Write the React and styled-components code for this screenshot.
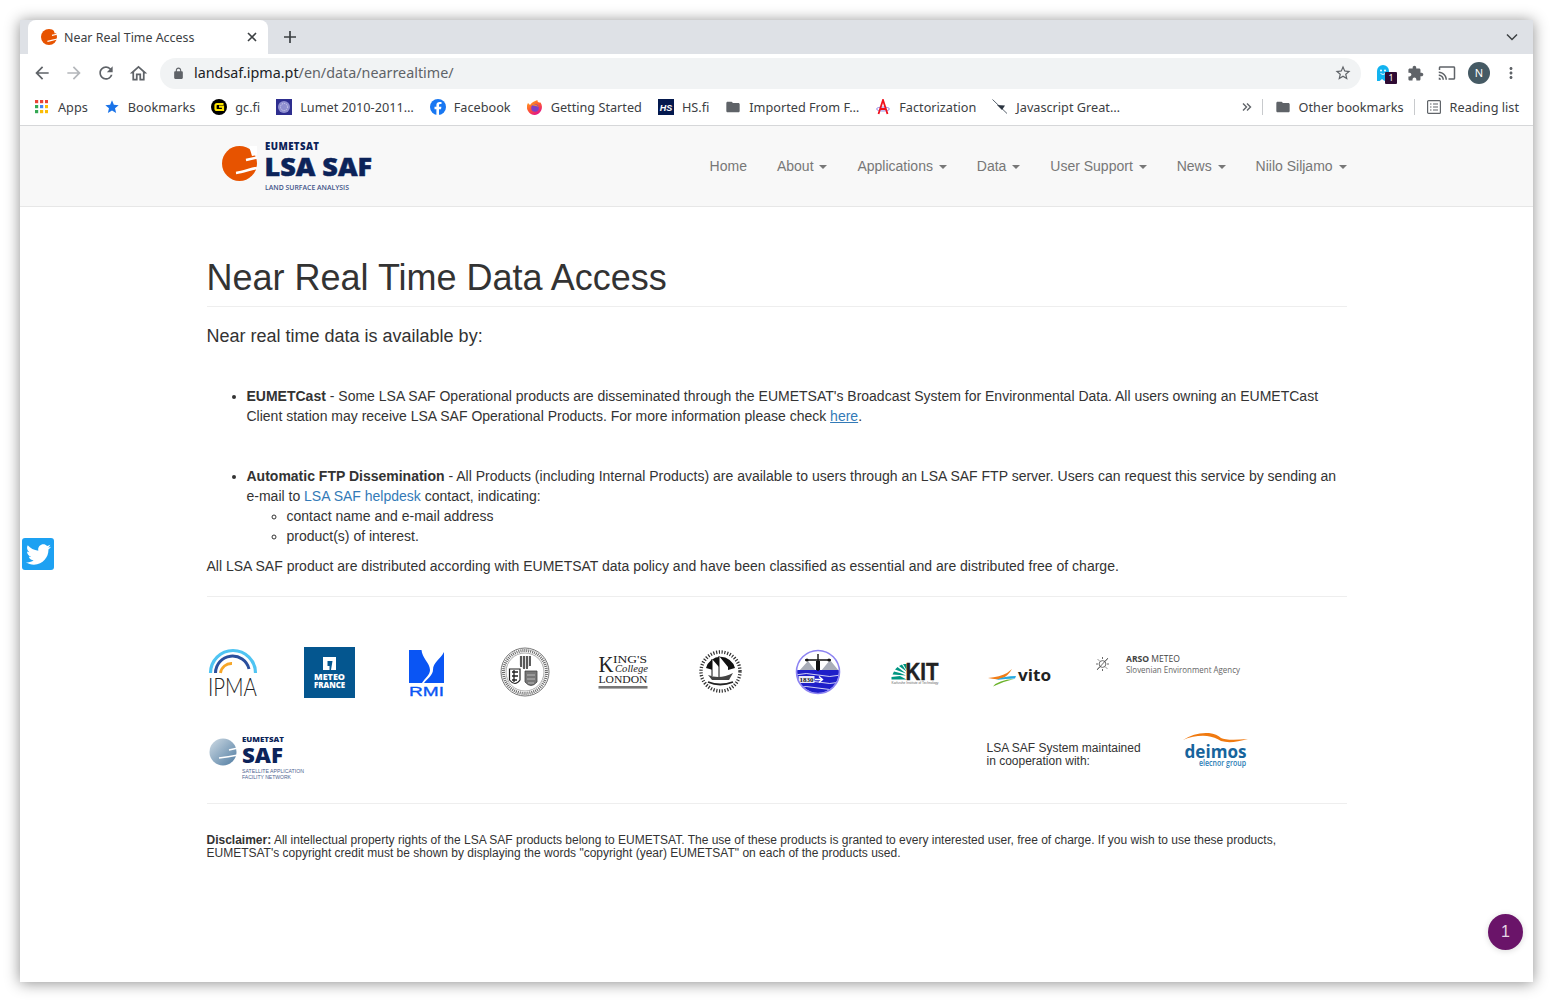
import React from 'react';
import styled, { createGlobalStyle } from 'styled-components';
import { FaTwitter } from 'react-icons/fa';

const Global = createGlobalStyle`
  html, body { margin: 0; padding: 0; background: #fff; }
  body { font-family: "Liberation Sans", Arial, sans-serif; overflow: hidden; }
  * { box-sizing: border-box; }
`;

const Page = styled.div`
  width: 1553px;
  height: 1002px;
  padding: 20px;
  background: #fff;
`;

const Window = styled.div`
  position: relative;
  display: flex;
  flex-direction: column;
  width: 1513px;
  height: 962px;
  background: #fff;
  box-shadow: 0 1px 14px rgba(0, 0, 0, 0.45);
  overflow: hidden;
`;

/* browser chrome */
const TabStrip = styled.div`
  display: flex;
  align-items: flex-end;
  height: 34px;
  padding: 0 6px 0 8px;
  background: #dee1e6;
  flex-shrink: 0;
`;

const Tab = styled.div`
  display: flex;
  align-items: center;
  width: 240px;
  height: 34px;
  padding: 0 11px 0 13px;
  background: #fff;
  border-radius: 8px 8px 0 0;
`;

const TabTitle = styled.span`
  flex: 1;
  margin-left: 7px;
  font: 12.4px "Noto Sans", sans-serif;
  color: #3c4043;
`;

const NewTab = styled.button`
  display: flex;
  align-items: center;
  justify-content: center;
  width: 28px;
  height: 28px;
  margin: 0 0 3px 8px;
  padding: 0;
  border: 0;
  background: none;
  color: #3c4043;
`;

const TabChevron = styled.div`
  display: flex;
  margin: 0 9px 13px auto;
  color: #3c4043;
`;

const Toolbar = styled.div`
  display: flex;
  align-items: center;
  height: 38px;
  padding: 0 6px;
  flex-shrink: 0;
`;

const ToolBtn = styled.div`
  position: relative;
  display: flex;
  align-items: center;
  justify-content: center;
  width: 32px;
  height: 32px;
  color: ${p => p.$off ? '#b4b7bb' : '#5f6368'};
`;

const Omnibox = styled.div`
  display: flex;
  align-items: center;
  flex: 1;
  height: 31px;
  margin: 0 6px;
  padding: 0 9px 0 12px;
  background: #f1f3f4;
  border-radius: 16px;
  color: #5f6368;
`;

const Url = styled.div`
  flex: 1;
  margin-left: 9px;
  margin-top: -1px;
  font: 14.33px "Noto Sans", sans-serif;
  color: #5f6368;
  b { font-weight: 400; color: #202124; }
`;

const ExtBadge = styled.span`
  position: absolute;
  left: 18px;
  top: 15px;
  width: 12px;
  height: 12px;
  background: #2f0b33;
  border-radius: 1px;
  color: #fff;
  font: 9px/12px "Noto Sans", sans-serif;
  text-align: center;
`;

const Avatar = styled.div`
  width: 22px;
  height: 22px;
  border-radius: 50%;
  background: #455a64;
  color: #fff;
  font: 11px/22px "Noto Sans", sans-serif;
  text-align: center;
`;

const BookmarksBar = styled.div`
  display: flex;
  align-items: center;
  gap: 16px;
  height: 34px;
  padding: 0 14px 3px 14px;
  border-bottom: 1px solid #d6d7d9;
  flex-shrink: 0;
`;

const Bookmark = styled.div`
  display: flex;
  align-items: center;
  gap: ${p => p.$gap || 8}px;
  font: 12.7px "Noto Sans", sans-serif;
  color: #3c4043;
  white-space: nowrap;
  svg { flex-shrink: 0; }
`;

const Overflow = styled.div`
  margin-left: auto;
  display: flex;
  color: #5f6368;
`;

const BarDivider = styled.div`
  width: 1px;
  height: 16px;
  background: #c8cacd;
  margin: 0 -4px 0 -6px;
`;

/* site navbar */
const Navbar = styled.nav`
  height: 81px;
  background: #f8f8f8;
  border-bottom: 1px solid #e7e7e7;
  flex-shrink: 0;
`;

const NavInner = styled.div`
  display: flex;
  align-items: flex-start;
  justify-content: space-between;
  width: 1170px;
  margin-left: 171.5px;
  padding-left: 30px;
`;

const LogoLink = styled.a`
  display: block;
  margin-top: 14px;
  line-height: 0;
`;

const NavList = styled.ul`
  display: flex;
  margin: 0;
  padding: 20px 0 0;
  list-style: none;
`;

const NavItem = styled.li`
  padding: 10px 15px;
  font-size: 14px;
  line-height: 20px;
  color: #777;
`;

const Caret = styled.span`
  display: inline-block;
  width: 0;
  height: 0;
  margin-left: 2px;
  vertical-align: middle;
  border-top: 4px solid #777;
  border-left: 4px solid transparent;
  border-right: 4px solid transparent;
`;

/* content */
const Main = styled.main`
  width: 1140px;
  margin-left: 186.5px;
  font-size: 14px;
  line-height: 20px;
  color: #333;
`;

const Title = styled.h1`
  margin: 51px 0 0;
  padding-bottom: 8px;
  border-bottom: 1px solid #eee;
  font-size: 36px;
  font-weight: 500;
  line-height: 40px;
  color: #333;
`;

const Lead = styled.p`
  margin: 16px 0 0;
  font-size: 18px;
  line-height: 26px;
`;

const BulletList = styled.ul`
  margin: ${p => p.$top}px 0 0;
  padding-left: 40px;
`;

const SubList = styled.ul`
  margin: 0;
  padding-left: 40px;
  list-style: circle;
`;

const Link = styled.a`
  color: #337ab7;
  text-decoration: ${p => p.$under ? 'underline' : 'none'};
`;

const Note = styled.p`
  margin: 10px 0 0;
`;

const Rule = styled.hr`
  margin: ${p => p.$top}px 0 0;
  border: 0;
  border-top: 1px solid #eee;
`;

const LogoRow = styled.div`
  display: flex;
  align-items: flex-start;
  margin-top: 49px;
  line-height: 0;
`;

const LogoCell = styled.div`
  margin-left: ${p => p.$ml}px;
  flex-shrink: 0;
  svg { overflow: visible; }
`;

const PartnerRow = styled.div`
  display: flex;
  align-items: flex-start;
  margin-top: 35px;
  height: 70px;
`;

const PartnerText = styled.div`
  margin: 9px 0 0 682px;
  width: 196px;
  font-size: 12px;
  line-height: 13px;
  color: #333;
`;

const Disclaimer = styled.p`
  margin: 30px 0 0;
  font-size: 12px;
  line-height: 13px;
  color: #333;
`;

/* overlays */
const TwitterBtn = styled.a`
  position: absolute;
  left: 2px;
  top: 518px;
  display: flex;
  align-items: center;
  justify-content: center;
  width: 32px;
  height: 32px;
  background: #1da1f2;
  border-radius: 3px;
  color: #fff;
`;

const ChatBubble = styled.div`
  position: absolute;
  left: 1468px;
  top: 894px;
  width: 35px;
  height: 36px;
  border-radius: 50%;
  background: #6a1469;
  box-shadow: 0 1px 6px rgba(0, 0, 0, 0.15);
  color: #e6d5e6;
  font-size: 16px;
  line-height: 35px;
  text-align: center;
`;

const Mi = ({ d, size = 16, fill = 'currentColor' }) => (
  <svg width={size} height={size} viewBox="0 0 24 24" fill={fill}><path d={d} /></svg>
);

const ICON = {
  back: 'M20 11H7.83l5.59-5.59L12 4l-8 8 8 8 1.41-1.41L7.83 13H20v-2z',
  reload: 'M17.65 6.35A7.958 7.958 0 0012 4c-4.42 0-7.99 3.58-7.99 8s3.57 8 7.99 8c3.73 0 6.84-2.55 7.73-6h-2.08A5.99 5.99 0 0112 18c-3.31 0-6-2.69-6-6s2.69-6 6-6c1.66 0 3.14.69 4.22 1.78L13 11h7V4l-2.35 2.35z',
  home: 'M12 5.69l5 4.5V18h-2v-6H9v6H7v-7.81l5-4.5M12 3L2 12h3v8h6v-6h2v6h6v-8h3L12 3z',
  lock: 'M18 8h-1V6c0-2.76-2.24-5-5-5S7 3.24 7 6v2H6c-1.1 0-2 .9-2 2v10c0 1.1.9 2 2 2h12c1.1 0 2-.9 2-2V10c0-1.1-.9-2-2-2zM9 6c0-1.66 1.34-3 3-3s3 1.34 3 3v2H9V6z',
  star: 'M22 9.24l-7.19-.62L12 2 9.19 8.63 2 9.24l5.46 4.73L5.82 21 12 17.27 18.18 21l-1.63-7.03L22 9.24zM12 15.4l-3.76 2.27 1-4.28-3.32-2.88 4.38-.38L12 6.1l1.71 4.04 4.38.38-3.32 2.88 1 4.28L12 15.4z',
  puzzle: 'M20.5 11H19V7c0-1.1-.9-2-2-2h-4V3.5C13 2.12 11.88 1 10.5 1S8 2.12 8 3.5V5H4c-1.1 0-1.99.9-1.99 2v3.8H3.5c1.49 0 2.7 1.21 2.7 2.7s-1.21 2.7-2.7 2.7H2V20c0 1.1.9 2 2 2h3.8v-1.5c0-1.49 1.21-2.7 2.7-2.7 1.49 0 2.7 1.21 2.7 2.7V22H17c1.1 0 2-.9 2-2v-4h1.5c1.38 0 2.5-1.12 2.5-2.5S21.88 11 20.5 11z',
  cast: 'M21 3H3c-1.1 0-2 .9-2 2v3h2V5h18v14h-7v2h7c1.1 0 2-.9 2-2V5c0-1.1-.9-2-2-2zM1 18v3h3c0-1.66-1.34-3-3-3zm0-4v2c2.76 0 5 2.24 5 5h2c0-3.87-3.13-7-7-7zm0-4v2c4.97 0 9 4.03 9 9h2c0-6.08-4.93-11-11-11z',
  folder: 'M10 4H4c-1.1 0-2 .9-2 2v12c0 1.1.9 2 2 2h16c1.1 0 2-.9 2-2V8c0-1.1-.9-2-2-2h-8l-2-2z',
  kebab: 'M12 8c1.1 0 2-.9 2-2s-.9-2-2-2-2 .9-2 2 .9 2 2 2zm0 2c-1.1 0-2 .9-2 2s.9 2 2 2 2-.9 2-2-.9-2-2-2zm0 6c-1.1 0-2 .9-2 2s.9 2 2 2 2-.9 2-2-.9-2-2-2z',
};

const LsaMark = ({ size = 35 }) => (
  <svg width={size} height={size} viewBox="0 0 35 35">
    <circle cx="17.5" cy="17.5" r="17.5" fill="#e75300" />
    <path d="M24 14 L35 11.5 M14 27 C22 26 28 23 35 22" stroke="#fff" strokeWidth="2.6" fill="none" />
    <path d="M27 0 L35 0 L35 9 L30 10 Z" fill="#fff" />
  </svg>
);

const Ghost = () => (
  <svg width="16" height="20" viewBox="0 0 16 20">
    <path d="M2 18 V8 a6 6 0 0 1 12 0 V17 l-2.6 -1.6 L9.5 18 L7 16 L4.6 18 Z" fill="#12b3f0" />
    <circle cx="6" cy="7.5" r="1" fill="#fff" />
    <circle cx="10" cy="7.5" r="1" fill="#fff" />
    <path d="M5.5 10.5 q2.5 2 5 0" stroke="#fff" fill="none" strokeWidth="0.9" />
  </svg>
);

const AppsIcon = () => (
  <svg width="14" height="14" viewBox="0 0 14 14">
    {['#ea4335', '#ea4335', '#ea4335', '#34a853', '#4285f4', '#fbbc05', '#34a853', '#fbbc05', '#fbbc05'].map((c, i) => (
      <rect key={i} x={1 + (i % 3) * 5} y={Math.floor(i / 3) * 5} width="3.2" height="3.2" fill={c} />
    ))}
  </svg>
);

const GcIcon = () => (
  <svg width="16" height="16" viewBox="0 0 16 16">
    <circle cx="8" cy="8" r="8" fill="#000" />
    <path d="M12.5 5 H6 a1.5 1.5 0 0 0 -1.5 1.5 v3 a1.5 1.5 0 0 0 1.5 1.5 h6 V7.7 H8" stroke="#fde400" strokeWidth="2.2" fill="none" />
  </svg>
);

const LumetIcon = () => (
  <svg width="16" height="16" viewBox="0 0 16 16">
    <rect width="16" height="16" fill="#2e2e8f" />
    <circle cx="8" cy="8" r="6" fill="#8f8fd0" />
    <circle cx="8" cy="8" r="3.5" fill="none" stroke="#d5d5ee" strokeDasharray="1 1" />
  </svg>
);

const FbIcon = () => (
  <svg width="16" height="16" viewBox="0 0 16 16">
    <circle cx="8" cy="8" r="8" fill="#1877f2" />
    <path d="M9 16 V10.2 h2 l.4 -2.4 H9 V6.4 c0 -.8 .4 -1.3 1.4 -1.3 h1.1 V3.1 c-.6 -.1 -1.3 -.2 -1.9 -.2 -2 0 -3.2 1.2 -3.2 3.2 v1.7 H4.5 v2.4 h1.9 V16 Z" fill="#fff" />
  </svg>
);

const FirefoxIcon = () => (
  <svg width="16" height="16" viewBox="0 0 16 16">
    <defs>
      <linearGradient id="ffx" x1="0" y1="0" x2="0.6" y2="1">
        <stop offset="0" stopColor="#ffb020" />
        <stop offset="0.55" stopColor="#ff5a30" />
        <stop offset="1" stopColor="#e31587" />
      </linearGradient>
    </defs>
    <path d="M8 16 A8 8 0 0 1 1 4 L3 6 Q5 3 7 2.5 L10.5 1 Q10 3 12 3.5 L13.5 3.5 A8 8 0 0 1 8 16 Z" fill="url(#ffx)" />
    <circle cx="8" cy="9" r="3.8" fill="#7b3fc8" />
    <path d="M4 6 Q8 4 12 8 L9 7 Z" fill="#ff9a20" />
  </svg>
);

const HsIcon = () => (
  <svg width="16" height="16" viewBox="0 0 16 16">
    <rect width="16" height="16" fill="#04194e" />
    <text x="8" y="11.5" textAnchor="middle" fontFamily="Liberation Sans" fontSize="9" fontWeight="700" fontStyle="italic" fill="#fff">HS</text>
  </svg>
);

const FactorIcon = () => (
  <svg width="16" height="16" viewBox="0 0 16 16">
    <ellipse cx="8" cy="10" rx="6.5" ry="2" fill="none" stroke="#7a6fe0" strokeWidth="0.8" />
    <path d="M3.5 15 L8 1 L12.5 15 M5.5 10 H10.5" stroke="#f0101c" strokeWidth="1.8" fill="none" />
  </svg>
);

const JsIcon = () => (
  <svg width="16" height="16" viewBox="0 0 16 16">
    <path d="M0.5 0.5 L15 14.5" stroke="#44505e" strokeWidth="0.9" />
    <path d="M5 6 L13 6.5 L10 11 Z" fill="#2b3440" />
  </svg>
);

const ReadingIcon = () => (
  <svg width="14" height="14" viewBox="0 0 14 14" fill="none" stroke="#5f6368" strokeWidth="1.2">
    <rect x="0.6" y="0.6" width="12.8" height="12.8" rx="1" />
    <path d="M3 4 H4.5 M3 7 H4.5 M3 10 H4.5 M6 4 H11 M6 7 H11 M6 10 H11" />
  </svg>
);

const SiteLogo = () => (
  <svg width="152" height="54" viewBox="0 0 152 54">
    <g transform="translate(0 6)"><LsaMark /></g>
    <text x="43" y="9.5" fontFamily="Open Sans" fontWeight="800" fontSize="9.6" fill="#0c2359" textLength="54">EUMETSAT</text>
    <text x="42.5" y="36" fontFamily="Open Sans" fontWeight="800" fontSize="25.5" fill="#0c2359" stroke="#0c2359" strokeWidth="0.5" textLength="107.5" lengthAdjust="spacingAndGlyphs">LSA SAF</text>
    <text x="43" y="49.5" fontFamily="Open Sans" fontWeight="600" fontSize="6.4" fill="#3f5488" textLength="84" lengthAdjust="spacingAndGlyphs">LAND SURFACE ANALYSIS</text>
  </svg>
);

const IpmaLogo = () => (
  <svg width="50" height="52" viewBox="0 0 50 52" fill="none">
    <path d="M2.5 27 A 22.5 22.5 0 0 1 47.5 27" stroke="#4fc4f2" strokeWidth="3.2" />
    <path d="M7.5 27 A 17 17 0 0 1 41 23" stroke="#2a4f9d" strokeWidth="3" />
    <path d="M12.5 27 A 11 11 0 0 1 24 17.5" stroke="#f6a628" strokeWidth="2.8" />
    <text x="0" y="50" fontFamily="Lato" fontWeight="300" fontSize="25" fill="#222" textLength="49" lengthAdjust="spacingAndGlyphs">IPMA</text>
  </svg>
);

const MeteoFrance = () => (
  <svg width="51" height="52" viewBox="0 0 51 52">
    <rect y="1" width="51" height="51" fill="#04568f" />
    <path d="M19 11 H32 V24 H27 L28.5 15 H23.5 V20 H25.5 V24 H19 Z" fill="#fff" />
    <text x="25.5" y="33.5" textAnchor="middle" fontFamily="Open Sans" fontWeight="800" fontSize="8.4" fill="#fff" textLength="31" lengthAdjust="spacingAndGlyphs">METEO</text>
    <text x="25.5" y="42" textAnchor="middle" fontFamily="Open Sans" fontWeight="800" fontSize="8" fill="#fff" textLength="31" lengthAdjust="spacingAndGlyphs">FRANCE</text>
  </svg>
);

const RmiLogo = () => (
  <svg width="36" height="52" viewBox="0 0 36 52">
    <path d="M0 4 H12.5 C13 12 21 17 21 24 C21 29 16 32 13 37 H0 Z" fill="#0a55f4" />
    <path d="M35 6 V37 H15 C18 33 24 29 24 24 C24 16 31 14 35 6 Z" fill="#0a55f4" />
    <text x="0" y="50" fontFamily="Liberation Sans" fontSize="12.5" fill="#0a55f4" stroke="#0a55f4" strokeWidth="0.3" textLength="35" lengthAdjust="spacingAndGlyphs">RMI</text>
  </svg>
);

const ValenciaSeal = () => (
  <svg width="50" height="52" viewBox="0 0 50 52" fill="none">
    <circle cx="25" cy="26" r="24" stroke="#777" strokeWidth="1" />
    <circle cx="25" cy="26" r="21.5" stroke="#666" strokeWidth="3" strokeDasharray="1 1" />
    <circle cx="25" cy="26" r="19" stroke="#888" strokeWidth="0.7" />
    <path d="M19.5 10 H30.5 V19 Q25 26 19.5 19 Z" fill="#dedede" />
    <path d="M21 10 V21 M24 10 V23 M27 10 V23 M30 10 V20" stroke="#222" strokeWidth="1.4" />
    <path d="M9.5 23 H20 V34 Q15 41 9.5 34 Z" fill="#fff" stroke="#222" strokeWidth="1.2" />
    <path d="M12 26 H18 M12 30 H18 M12 34 H17 M14 24 V36" stroke="#222" strokeWidth="1.3" />
    <path d="M25 25 H37 V36 Q31 43 25 36 Z" fill="#777" stroke="#444" strokeWidth="0.8" />
    <path d="M27 29 H35 M27 33 H35 M28 37 H34" stroke="#bbb" strokeWidth="1" />
  </svg>
);

const KingsLogo = () => (
  <svg width="51" height="52" viewBox="0 0 51 52" fontFamily="Liberation Serif" fill="#222">
    <text x="0.5" y="26" fontSize="23" textLength="15" lengthAdjust="spacingAndGlyphs">K</text>
    <text x="15" y="17" fontSize="9.5" textLength="34" lengthAdjust="spacingAndGlyphs">ING'S</text>
    <text x="17" y="26" fontSize="10.5" fontStyle="italic" textLength="33" lengthAdjust="spacingAndGlyphs">College</text>
    <text x="0.5" y="37" fontSize="10.2" textLength="49" lengthAdjust="spacingAndGlyphs">LONDON</text>
    <rect x="0.5" y="40" width="49" height="2.6" fill="#777" />
  </svg>
);

const ShipSeal = () => (
  <svg width="45" height="52" viewBox="0 0 45 52" fill="none">
    <circle cx="22.5" cy="25.5" r="19.5" stroke="#333" strokeWidth="3.4" strokeDasharray="1.2 1.6" />
    <path d="M8 22 A15 15 0 0 1 37 22 L30 24 L15 24 Z" fill="#111" />
    <path d="M14 27 V13 L21 21 V10 L30 21 V27 Z" fill="#fff" />
    <path d="M21 10 V31 M14 13 V30" stroke="#111" strokeWidth="1" />
    <path d="M10 29 Q22 34 35 27 L31 34 H14 Z" fill="#444" />
    <path d="M10 36 Q22 41 35 36" stroke="#222" strokeWidth="1.8" />
  </svg>
);

const VaneSeal = () => (
  <svg width="46" height="52" viewBox="0 0 46 52">
    <defs>
      <clipPath id="vaneClip"><circle cx="23" cy="26" r="21" /></clipPath>
    </defs>
    <g clipPath="url(#vaneClip)">
      <rect width="46" height="25" fill="#fff" />
      <path d="M4 25 L13 15 L21 25 Z M26 25 L35 14 L44 25 Z" fill="#a9adb8" />
      <rect y="24" width="46" height="28" fill="#1e1ec9" />
      <path d="M0 29 Q11 26 23 29 T46 29 M0 36 Q11 33 23 36 T46 36 M0 42 Q11 39 23 42 T46 42" stroke="#fff" strokeWidth="0.8" fill="none" />
    </g>
    <path d="M10 14 H36 M23 8 V25" stroke="#111" strokeWidth="1.4" />
    <rect x="21" y="15" width="4" height="9" fill="#111" />
    <circle cx="12" cy="14" r="1.6" fill="#111" />
    <circle cx="34" cy="14" r="1.6" fill="#111" />
    <rect x="3.5" y="30" width="16" height="7" fill="#e9e9f5" />
    <text x="11.5" y="36" textAnchor="middle" fontFamily="Liberation Serif" fontWeight="700" fontSize="7" fill="#111">1830</text>
    <path d="M20 33.5 H27 M24 30.5 L27.5 33.5 L24 36.5" stroke="#fff" strokeWidth="1.4" fill="none" />
    <circle cx="23" cy="26" r="21.5" fill="none" stroke="#8d84f2" strokeWidth="1.6" />
  </svg>
);

const KitLogo = () => (
  <svg width="48" height="52" viewBox="0 0 48 52">
    <path d="M15.5 33.5 H0.5 V31 L9 30 Z M15 29.5 L1.5 28.5 L3 25.5 L9 27 Z M15 27.5 L4 23.5 L6.5 21 Z M15.5 25.5 L8 20 L11 18.5 Z M15.5 24 L12 18 L15.5 18 Z" fill="#009682" />
    <text x="14.5" y="33.5" fontFamily="Liberation Sans" fontWeight="700" fontSize="23" fill="#222" stroke="#222" strokeWidth="0.4" textLength="33" lengthAdjust="spacingAndGlyphs">KIT</text>
    <text x="0.5" y="38" fontFamily="Liberation Sans" fontSize="3" fill="#666" textLength="47" lengthAdjust="spacingAndGlyphs">Karlsruhe Institute of Technology</text>
  </svg>
);

const VitoLogo = () => (
  <svg width="64" height="52" viewBox="0 0 64 52">
    <path d="M0 32 Q12 31 19 27 L24 23 Q20 30 14 32.5 Q8 34 0 32 Z" fill="#f07d18" />
    <path d="M8 34 Q16 30 28 30 L27 32.5 Q18 32.5 8 34 Z" fill="#27a9e0" />
    <path d="M5 40.5 Q10 34 26 33 Q15 35.5 5 40.5 Z" fill="#6cb32c" />
    <text x="30" y="35" fontFamily="Open Sans" fontWeight="700" fontSize="15.5" fill="#222" textLength="33" lengthAdjust="spacingAndGlyphs">vito</text>
  </svg>
);

const ArsoLogo = () => (
  <svg width="146" height="52" viewBox="0 0 146 52" fontFamily="Open Sans" fill="#444">
    <g stroke="#444" strokeWidth="0.8" fill="none">
      <circle cx="7.5" cy="18" r="3.4" />
      <path d="M7.5 11 V13 M7.5 23 V25 M1 18 H3 M12 18 H14 M2.8 13.3 L4.2 14.7 M10.8 21.3 L12.2 22.7 M12.2 13.3 L10.8 14.7 M4.2 21.3 L2.8 22.7 M2 24 L13 12" />
    </g>
    <text x="31" y="16.2" fontSize="8.6" textLength="54" lengthAdjust="spacingAndGlyphs"><tspan fontWeight="700">ARSO</tspan> METEO</text>
    <text x="31" y="27" fontSize="8.6" fill="#666" textLength="114" lengthAdjust="spacingAndGlyphs">Slovenian Environment Agency</text>
  </svg>
);

const SafLogo = () => (
  <svg width="98" height="50" viewBox="0 0 98 50">
    <defs>
      <linearGradient id="saf" x1="0" y1="0" x2="0.9" y2="0.9">
        <stop offset="0" stopColor="#cfdbe4" />
        <stop offset="1" stopColor="#5c85a8" />
      </linearGradient>
    </defs>
    <circle cx="16" cy="19" r="13.5" fill="url(#saf)" />
    <path d="M22 17 L31 15 M12 25 Q21 24 31 22" stroke="#fff" strokeWidth="1.6" fill="none" />
    <text x="35" y="9" fontFamily="Open Sans" fontWeight="800" fontSize="7.6" fill="#0c2359" textLength="42" lengthAdjust="spacingAndGlyphs">EUMETSAT</text>
    <text x="35" y="29.5" fontFamily="Open Sans" fontWeight="800" fontSize="21" fill="#0c2359" textLength="41" lengthAdjust="spacingAndGlyphs">SAF</text>
    <text x="35" y="40" fontFamily="Liberation Sans" fontSize="5.4" fill="#4d6390" textLength="62" lengthAdjust="spacingAndGlyphs">SATELLITE APPLICATION</text>
    <text x="35" y="46" fontFamily="Liberation Sans" fontSize="5.4" fill="#4d6390" textLength="49" lengthAdjust="spacingAndGlyphs">FACILITY NETWORK</text>
  </svg>
);

const DeimosLogo = () => (
  <svg width="66" height="40" viewBox="0 2 66 40">
    <path d="M0 9 Q12 1 26 2 Q34 3 38 7 Q44 10 65 8 Q48 13 38 10 Q32 6 24 5 Q12 4 0 9 Z" fill="#f07a10" />
    <text x="1.5" y="27" fontFamily="Open Sans" fontWeight="700" fontSize="18" fill="#17649c" textLength="62" lengthAdjust="spacingAndGlyphs">deimos</text>
    <text x="16" y="35" fontFamily="Open Sans" fontWeight="600" fontSize="8" fill="#2a7cb5" textLength="47" lengthAdjust="spacingAndGlyphs">elecnor group</text>
  </svg>
);

const bookmarks = [
  { icon: <AppsIcon />, label: 'Apps', gap: 10 },
  { icon: <Mi d="M12 17.27L18.18 21l-1.64-7.03L22 9.24l-7.19-.61L12 2 9.19 8.63 2 9.24l5.46 4.73L5.82 21z" fill="#1a73e8" />, label: 'Bookmarks' },
  { icon: <GcIcon />, label: 'gc.fi' },
  { icon: <LumetIcon />, label: 'Lumet 2010-2011…' },
  { icon: <FbIcon />, label: 'Facebook' },
  { icon: <FirefoxIcon />, label: 'Getting Started' },
  { icon: <HsIcon />, label: 'HS.fi' },
  { icon: <Mi d={ICON.folder} fill="#5f6368" />, label: 'Imported From F…' },
  { icon: <FactorIcon />, label: 'Factorization' },
  { icon: <JsIcon />, label: 'Javascript Great…' },
];

const navItems = [
  ['Home', false], ['About', true], ['Applications', true], ['Data', true],
  ['User Support', true], ['News', true], ['Niilo Siljamo', true],
];

const logos = [
  [1, <IpmaLogo />], [46, <MeteoFrance />], [54, <RmiLogo />], [55, <ValenciaSeal />],
  [48, <KingsLogo />], [49, <ShipSeal />], [52, <VaneSeal />], [50, <KitLogo />],
  [49, <VitoLogo />], [43, <ArsoLogo />],
];

export default function App() {
  return (
    <Page>
      <Global />
      <Window>
        <TabStrip>
          <Tab>
            <LsaMark size={16} />
            <TabTitle>Near Real Time Access</TabTitle>
            <svg width="10" height="10" viewBox="0 0 10 10"><path d="M1 1 L9 9 M9 1 L1 9" stroke="#3c4043" strokeWidth="1.6" /></svg>
          </Tab>
          <NewTab>
            <svg width="12" height="12" viewBox="0 0 12 12"><path d="M6 0 V12 M0 6 H12" stroke="currentColor" strokeWidth="1.7" /></svg>
          </NewTab>
          <TabChevron>
            <svg width="12" height="8" viewBox="0 0 12 8" fill="none"><path d="M1 1.5 L6 6.5 L11 1.5" stroke="currentColor" strokeWidth="1.5" /></svg>
          </TabChevron>
        </TabStrip>

        <Toolbar>
          <ToolBtn><Mi d={ICON.back} size={20} /></ToolBtn>
          <ToolBtn $off><svg width="20" height="20" viewBox="0 0 24 24" fill="currentColor" transform="scale(-1 1)"><path d={ICON.back} /></svg></ToolBtn>
          <ToolBtn><Mi d={ICON.reload} size={20} /></ToolBtn>
          <ToolBtn><Mi d={ICON.home} size={21} /></ToolBtn>
          <Omnibox>
            <Mi d={ICON.lock} size={13} />
            <Url><b>landsaf.ipma.pt</b>/en/data/nearrealtime/</Url>
            <Mi d={ICON.star} size={18} />
          </Omnibox>
          <ToolBtn><Ghost /><ExtBadge>1</ExtBadge></ToolBtn>
          <ToolBtn><Mi d={ICON.puzzle} size={17} /></ToolBtn>
          <ToolBtn><Mi d={ICON.cast} size={18} /></ToolBtn>
          <ToolBtn><Avatar>N</Avatar></ToolBtn>
          <ToolBtn><Mi d={ICON.kebab} size={18} /></ToolBtn>
        </Toolbar>

        <BookmarksBar>
          {bookmarks.map(b => (
            <Bookmark key={b.label} $gap={b.gap}>{b.icon}{b.label}</Bookmark>
          ))}
          <Overflow>
            <svg width="10" height="10" viewBox="0 0 10 10" fill="none"><path d="M1 1.5 L4.5 5 L1 8.5 M5 1.5 L8.5 5 L5 8.5" stroke="currentColor" strokeWidth="1.4" /></svg>
          </Overflow>
          <BarDivider />
          <Bookmark><Mi d={ICON.folder} fill="#5f6368" />Other bookmarks</Bookmark>
          <BarDivider />
          <Bookmark $gap={9}><ReadingIcon />Reading list</Bookmark>
        </BookmarksBar>

        <Navbar>
          <NavInner>
            <LogoLink><SiteLogo /></LogoLink>
            <NavList>
              {navItems.map(([label, drop]) => (
                <NavItem key={label}>{label}{drop && <> <Caret /></>}</NavItem>
              ))}
            </NavList>
          </NavInner>
        </Navbar>

        <Main>
          <Title>Near Real Time Data Access</Title>
          <Lead>Near real time data is available by:</Lead>
          <BulletList $top={37}>
            <li>
              <strong>EUMETCast</strong> - Some LSA SAF Operational products are disseminated through the EUMETSAT's Broadcast System for Environmental Data. All users owning an EUMETCast Client station may receive LSA SAF Operational Products. For more information please check <Link $under>here</Link>.
            </li>
          </BulletList>
          <BulletList $top={40}>
            <li>
              <strong>Automatic FTP Dissemination</strong> - All Products (including Internal Products) are available to users through an LSA SAF FTP server. Users can request this service by sending an e-mail to <Link>LSA SAF helpdesk</Link> contact, indicating:
              <SubList>
                <li>contact name and e-mail address</li>
                <li>product(s) of interest.</li>
              </SubList>
            </li>
          </BulletList>
          <Note>All LSA SAF product are distributed according with EUMETSAT data policy and have been classified as essential and are distributed free of charge.</Note>
          <Rule $top={20} />
          <LogoRow>
            {logos.map(([ml, logo], i) => <LogoCell key={i} $ml={ml}>{logo}</LogoCell>)}
          </LogoRow>
          <PartnerRow>
            <LogoCell $ml={0}><SafLogo /></LogoCell>
            <PartnerText>LSA SAF System maintained<br />in cooperation with:</PartnerText>
            <LogoCell $ml={0}><DeimosLogo /></LogoCell>
          </PartnerRow>
          <Rule $top={0} />
          <Disclaimer>
            <strong>Disclaimer:</strong> All intellectual property rights of the LSA SAF products belong to EUMETSAT. The use of these products is granted to every interested user, free of charge. If you wish to use these products, EUMETSAT's copyright credit must be shown by displaying the words "copyright (year) EUMETSAT" on each of the products used.
          </Disclaimer>
        </Main>

        <TwitterBtn><FaTwitter size={25} /></TwitterBtn>
        <ChatBubble>1</ChatBubble>
      </Window>
    </Page>
  );
}
